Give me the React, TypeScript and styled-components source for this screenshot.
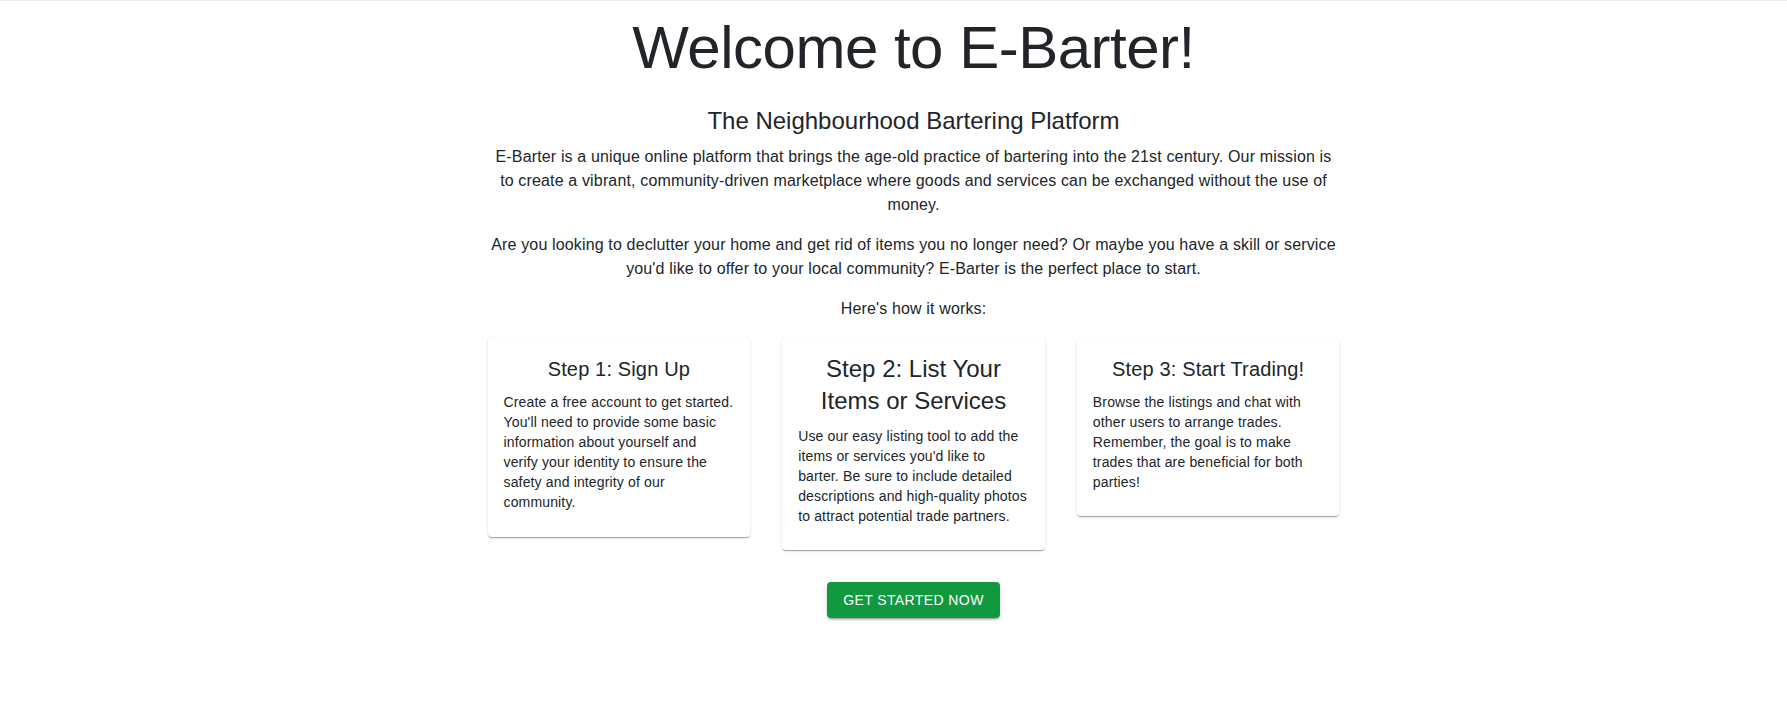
import { FC } from "react";
import styled, { createGlobalStyle } from "styled-components";

type Step = {
  title: string;
  text: string;
  big?: boolean;
};

const steps: Step[] = [
  {
    title: "Step 1: Sign Up",
    text: "Create a free account to get started. You'll need to provide some basic information about yourself and verify your identity to ensure the safety and integrity of our community.",
  },
  {
    title: "Step 2: List Your Items or Services",
    text: "Use our easy listing tool to add the items or services you'd like to barter. Be sure to include detailed descriptions and high-quality photos to attract potential trade partners.",
    big: true,
  },
  {
    title: "Step 3: Start Trading!",
    text: "Browse the listings and chat with other users to arrange trades. Remember, the goal is to make trades that are beneficial for both parties!",
  },
];

const StepCard: FC<{ step: Step }> = ({ step }): JSX.Element => {
  return (
    <Card>
      <CardContent>
        <CardTitle $big={step.big}>{step.title}</CardTitle>
        <CardText>{step.text}</CardText>
      </CardContent>
    </Card>
  );
};

export default function App(): JSX.Element {
  return (
    <>
      <GlobalStyle />
      <Page>
        <Container>
          <Title>Welcome to E-Barter!</Title>
          <Subtitle>The Neighbourhood Bartering Platform</Subtitle>
          <Paragraph>
            E-Barter is a unique online platform that brings the age-old practice of bartering
            into the 21st century. Our mission is to create a vibrant, community-driven
            marketplace where goods and services can be exchanged without the use of money.
          </Paragraph>
          <Paragraph>
            Are you looking to declutter your home and get rid of items you no longer need? Or
            maybe you have a skill or service you'd like to offer to your local community?
            E-Barter is the perfect place to start.
          </Paragraph>
          <Paragraph>Here's how it works:</Paragraph>

          <CardGrid>
            {steps.map((step) => (
              <StepCard key={step.title} step={step} />
            ))}
          </CardGrid>

          <ButtonRow>
            <StartBtn type="button">Get Started Now</StartBtn>
          </ButtonRow>
        </Container>
      </Page>
    </>
  );
}

const GlobalStyle = createGlobalStyle`
  body {
    margin: 0;
    background: #fff;
    color: #212529;
    font-family: "Liberation Sans", Arial, Helvetica, sans-serif;
  }
  * {
    box-sizing: border-box;
  }
`;

const Page = styled.main`
  border-top: 1px solid #ededed;
  padding: 11px 0 40px 40px;
`;

const Container = styled.div`
  max-width: 900px;
  margin: 0 auto;
  padding: 0 24px;
  text-align: center;
`;

const Title = styled.h2`
  margin: 0 0 21px;
  font-size: 60px;
  font-weight: 400;
  line-height: 1.2;
  letter-spacing: -0.00833em;
`;

const Subtitle = styled.h5`
  margin: 0 0 0.35em;
  font-size: 24px;
  font-weight: 400;
  line-height: 1.334;
`;

const Paragraph = styled.p`
  margin: 0 0 16px;
  font-size: 16px;
  line-height: 1.5;
  letter-spacing: 0.00938em;
`;

const CardGrid = styled.div`
  display: grid;
  grid-template-columns: repeat(3, 1fr);
  gap: 32px;
  align-items: start;
`;

const Card = styled.div`
  background: #fff;
  border-radius: 4px;
  box-shadow: 0 2px 1px -1px rgba(0, 0, 0, 0.2), 0 1px 1px 0 rgba(0, 0, 0, 0.14),
    0 1px 3px 0 rgba(0, 0, 0, 0.12);
  overflow: hidden;
`;

const CardContent = styled.div`
  padding: 16px 16px 24px;
`;

const CardTitle = styled.div<{ $big?: boolean }>`
  margin: 0 0 0.35em;
  text-align: center;
  font-size: ${(p) => (p.$big ? "24px" : "20px")};
  line-height: ${(p) => (p.$big ? 1.334 : 1.6)};
  letter-spacing: ${(p) => (p.$big ? "0" : "0.0075em")};
`;

const CardText = styled.p`
  margin: 0;
  text-align: left;
  font-size: 14px;
  line-height: 1.43;
  letter-spacing: 0.01071em;
`;

const ButtonRow = styled.div`
  display: flex;
  justify-content: center;
  margin-top: 32px;
`;

const StartBtn = styled.button`
  border: 0;
  border-radius: 4px;
  background-color: #10993f;
  color: #fff;
  padding: 6px 16px;
  font-family: inherit;
  font-size: 14px;
  line-height: 1.75;
  letter-spacing: 0.02857em;
  text-transform: uppercase;
  cursor: pointer;
  box-shadow: 0 3px 1px -2px rgba(0, 0, 0, 0.2), 0 2px 2px 0 rgba(0, 0, 0, 0.14),
    0 1px 5px 0 rgba(0, 0, 0, 0.12);
`;
